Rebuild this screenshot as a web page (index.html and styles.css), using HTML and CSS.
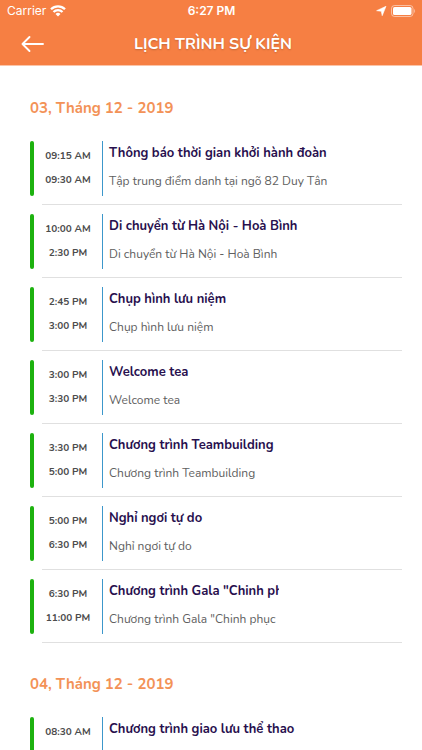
FILE: index.html
```html
<!DOCTYPE html>
<html lang="vi">
<head>
<meta charset="utf-8">
<meta name="viewport" content="width=device-width, initial-scale=1">
<title>Lịch trình sự kiện</title>
<link rel="stylesheet" href="styles.css">
</head>
<body>
<header class="header">
  <div class="status">
    <div class="status-side">
      <span class="carrier">Carrier</span>
      <svg class="wifi" width="16" height="12" viewBox="0 0 16 12" aria-hidden="true"><g fill="none" stroke="currentColor" stroke-width="2.300"><path d="M1 4.200a10 10 0 0 1 14 0"/><path d="M3.500 7a6.400 6.400 0 0 1 9 0"/></g><path d="M8 11.600L5.500 9a3.500 3.500 0 0 1 5 0z" fill="currentColor"/></svg>
    </div>
    <span class="clock">6:27 PM</span>
    <div class="status-side status-right">
      <svg width="11" height="10" viewBox="0 0 11 10" aria-hidden="true"><path d="M10 .3L6.200 9.700 5.300 5.200.600 4.700z" fill="currentColor" stroke="currentColor" stroke-width=".6" stroke-linejoin="round"/></svg>
      <svg width="25" height="12" viewBox="0 0 25 12" aria-hidden="true"><rect x=".5" y=".5" width="21.500" height="11" rx="3" fill="none" stroke="currentColor" stroke-opacity=".5"/><rect x="2" y="2" width="18.500" height="8" rx="1.600" fill="currentColor"/><path d="M23.200 4v4c1.200-.5 1.200-3.500 0-4z" fill="currentColor" fill-opacity=".5"/></svg>
    </div>
  </div>
  <div class="navbar">
    <button class="back" type="button" aria-label="Quay lại"><svg width="24" height="18" viewBox="0 0 24 18" aria-hidden="true"><path d="M22 9H1.500M8.500 2L1.500 9l7 7" fill="none" stroke="currentColor" stroke-width="1.900" stroke-linecap="round" stroke-linejoin="round"/></svg></button>
    <h1 class="title">LỊCH TRÌNH SỰ KIỆN</h1>
  </div>
</header>
<main class="schedule">
  <section class="day">
    <h2 class="date">03, Tháng 12 - 2019</h2>
    <ul class="events">
      <li class="event"><div class="times"><time>09:15 AM</time><time>09:30 AM</time></div><div class="info"><h3 class="name">Thông báo thời gian khởi hành đoàn</h3><p class="desc">Tập trung điểm danh tại ngõ 82 Duy Tân</p></div></li>
      <li class="event"><div class="times"><time>10:00 AM</time><time>2:30 PM</time></div><div class="info"><h3 class="name">Di chuyển từ Hà Nội - Hoà Bình</h3><p class="desc">Di chuyển từ Hà Nội - Hoà Bình</p></div></li>
      <li class="event"><div class="times"><time>2:45 PM</time><time>3:00 PM</time></div><div class="info"><h3 class="name">Chụp hình lưu niệm</h3><p class="desc">Chụp hình lưu niệm</p></div></li>
      <li class="event"><div class="times"><time>3:00 PM</time><time>3:30 PM</time></div><div class="info"><h3 class="name">Welcome tea</h3><p class="desc">Welcome tea</p></div></li>
      <li class="event"><div class="times"><time>3:30 PM</time><time>5:00 PM</time></div><div class="info"><h3 class="name">Chương trình Teambuilding</h3><p class="desc">Chương trình Teambuilding</p></div></li>
      <li class="event"><div class="times"><time>5:00 PM</time><time>6:30 PM</time></div><div class="info"><h3 class="name">Nghỉ ngơi tự do</h3><p class="desc">Nghỉ ngơi tự do</p></div></li>
      <li class="event"><div class="times"><time>6:30 PM</time><time>11:00 PM</time></div><div class="info"><h3 class="name name-clipped">Chương trình Gala "Chinh phục</h3><p class="desc">Chương trình Gala "Chinh phục</p></div></li>
    </ul>
  </section>
  <section class="day">
    <h2 class="date">04, Tháng 12 - 2019</h2>
    <ul class="events">
      <li class="event"><div class="times"><time>08:30 AM</time></div><div class="info"><h3 class="name">Chương trình giao lưu thể thao</h3></div></li>
    </ul>
  </section>
</main>
</body>
</html>
```
FILE: styles.css
```css
* {
  box-sizing: border-box;
}

body {
  margin: 0;
  height: 100vh;
  display: flex;
  flex-direction: column;
  overflow: hidden;
  background: #fff;
  font-family: Nunito, "Open Sans", "Noto Sans", sans-serif;
}

h1, h2, h3, p, ul {
  margin: 0;
  padding: 0;
}

.header {
  flex: none;
  background: #f67f43;
  color: #fff;
  border-bottom: 1px solid #fbc4a8;
}

.status {
  display: grid;
  grid-template-columns: 1fr auto 1fr;
  align-items: center;
  height: 22px;
  padding: 0 6px 0 7px;
  font-family: Inter, sans-serif;
  font-size: 12px;
  line-height: 22px;
}

.status-side {
  display: flex;
  align-items: center;
  gap: 4px;
}

.status-right {
  justify-content: flex-end;
}

.clock {
  font-weight: 600;
}

.navbar {
  display: grid;
  grid-template-columns: 60px 1fr 56px;
  align-items: center;
  height: 43px;
}

.back {
  display: flex;
  padding: 0 0 0 21px;
  border: 0;
  background: none;
  color: inherit;
}

.title {
  text-align: center;
  font-size: 16px;
  line-height: 24px;
  font-weight: 700;
  text-shadow: 0 1px 2px rgba(0, 0, 0, 0.2);
}

.schedule {
  flex: 1;
  min-height: 0;
  overflow: hidden;
  padding: 30px 20px 0 30px;
}

.day {
  margin-bottom: 20px;
}

.date {
  margin-bottom: 21px;
  color: #f39257;
  font-size: 15px;
  line-height: 24px;
  font-weight: 700;
}

.events {
  list-style: none;
}

.event {
  position: relative;
  display: flex;
  height: 73px;
  padding-bottom: 18px;
}

.event::before {
  content: "";
  width: 4px;
  border-radius: 2px;
  background: #1db20f;
}

.event::after {
  content: "";
  position: absolute;
  left: 12px;
  right: 0;
  bottom: 9px;
  height: 1px;
  background: #e0e0e0;
}

.times {
  width: 69px;
  margin-right: 6px;
  padding-top: 3px;
  border-right: 1px solid #3c97cb;
  display: flex;
  flex-direction: column;
  text-align: center;
  color: #4c4c4c;
  font-size: 10px;
  line-height: 24px;
  font-weight: 700;
}

.info {
  flex: 1;
  min-width: 0;
  white-space: nowrap;
}

.name {
  margin-bottom: 4px;
  color: #28104e;
  font-size: 13px;
  line-height: 24px;
  font-weight: 700;
}

.name-clipped {
  width: 170px;
  overflow: hidden;
}

.desc {
  color: #606060;
  font-size: 12px;
  line-height: 24px;
}
```
